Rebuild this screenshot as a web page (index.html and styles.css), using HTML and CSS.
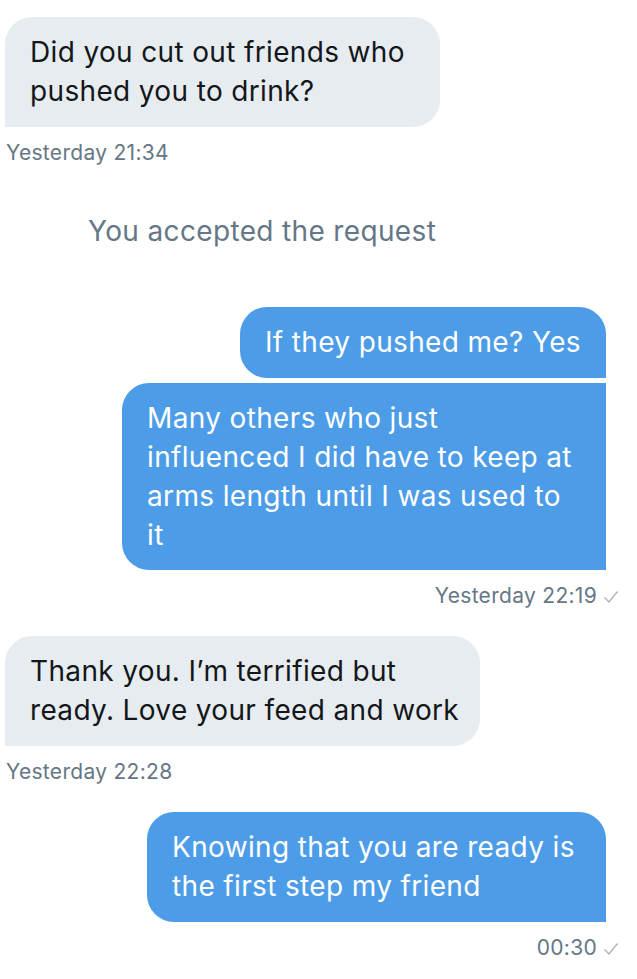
FILE: index.html
```html
<!DOCTYPE html>
<html>
<head>
<meta charset="utf-8">
<link rel="stylesheet" href="styles.css">
</head>
<body>
<div class="thread">
  <div class="group in first">
    <div class="bubble recv w1">Did you cut out friends who pushed you to drink?</div>
    <div class="stamp">Yesterday 21:34</div>
  </div>
  <div class="notice">You accepted the request</div>
  <div class="group out">
    <div class="bubble sent top w2">If they pushed me? Yes</div>
    <div class="bubble sent mid w3">Many others who just influenced I did have to keep at arms length until I was used to it</div>
    <div class="stamp">Yesterday 22:19 <svg class="check" viewBox="0 0 16 14" width="16" height="14"><path d="M1.5 7.5 L6 12 L14.5 1.5" fill="none" stroke="#aab4bd" stroke-width="1.4"/></svg></div>
  </div>
  <div class="group in">
    <div class="bubble recv w4">Thank you. I’m terrified but ready. Love your feed and work</div>
    <div class="stamp">Yesterday 22:28</div>
  </div>
  <div class="group out">
    <div class="bubble sent top w5">Knowing that you are ready is the first step my friend</div>
    <div class="stamp">00:30 <svg class="check" viewBox="0 0 16 14" width="16" height="14"><path d="M1.5 7.5 L6 12 L14.5 1.5" fill="none" stroke="#aab4bd" stroke-width="1.4"/></svg></div>
  </div>
</div>
</body>
</html>
```
FILE: styles.css
```css
* { box-sizing: border-box; }
html, body { margin: 0; padding: 0; background: #ffffff; }
body {
  font-family: Inter, "Noto Sans", "Liberation Sans", sans-serif;
  -webkit-font-smoothing: antialiased;
}
.thread {
  display: flex;
  flex-direction: column;
  padding-top: 17px;
}
.group {
  display: flex;
  flex-direction: column;
  gap: 5px;
  margin-top: 28px;
}
.group.first { margin-top: 0; }
.group.in { align-items: flex-start; padding-left: 5px; }
.group.out { align-items: flex-end; padding-right: 31px; }
.bubble {
  font-size: 28px;
  letter-spacing: 0.35px;
  line-height: 39px;
  padding: 16px 16px 16px 25px;
  border-radius: 27px;
}
.recv {
  background: #e6ecf0;
  color: #14171a;
  border-bottom-left-radius: 0;
}
.sent {
  background: #4c9ce8;
  color: #ffffff;
}
.sent.top { border-bottom-right-radius: 0; }
.sent.mid { border-top-right-radius: 0; border-bottom-right-radius: 0; padding-bottom: 15px; }
.w1 { width: 435px; }
.w2 { width: 366px; white-space: nowrap; }
.w3 { width: 484px; padding-right: 32px; }
.w4 { width: 475px; }
.w5 { width: 459px; }
.stamp {
  font-size: 21px;
  letter-spacing: 0.3px;
  line-height: 24px;
  color: #657786;
  margin-top: 9px;
  display: flex;
  align-items: center;
  gap: 6px;
}
.group.in .stamp { margin-left: 1px; }
.group.out .stamp { margin-right: -13px; }
.check { display: block; margin-top: 1px; }
.notice {
  font-size: 28px;
  letter-spacing: 0.35px;
  line-height: 39px;
  color: #657786;
  padding-left: 88px;
  margin-top: 47px;
  margin-bottom: 28px;
}
```
